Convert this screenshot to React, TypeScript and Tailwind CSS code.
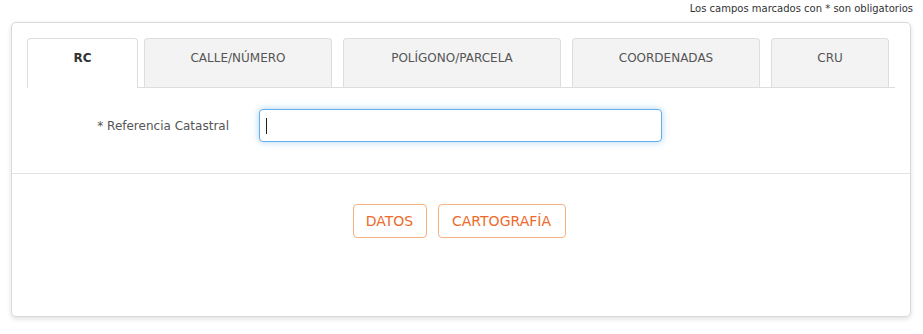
import { useState } from 'react'

const tabs = [
  { id: 'rc', label: 'RC', width: 'w-[111px]', gap: 'mr-[6px]' },
  { id: 'calle', label: 'CALLE/NÚMERO', width: 'w-[188px]', gap: 'mr-[11px]' },
  { id: 'poligono', label: 'POLÍGONO/PARCELA', width: 'w-[218px]', gap: 'mr-[11px]' },
  { id: 'coord', label: 'COORDENADAS', width: 'w-[188px]', gap: 'mr-[11px]' },
  { id: 'cru', label: 'CRU', width: 'w-[118px]', gap: '' },
]

export default function App() {
  const [active, setActive] = useState('rc')

  return (
    <div className="min-h-[334px] bg-white font-['DejaVu_Sans',Verdana,sans-serif] text-[#333]">
      <div className="flex h-[22px] justify-end pt-[2px] pr-[10px] text-[10px] leading-[14px] text-[#333]">
        Los campos marcados con * son obligatorios
      </div>

      <div className="ml-[11px] w-[900px] rounded-[5px] border border-[#d9d9d9] bg-white shadow-[0_2px_5px_rgba(0,0,0,0.12)]">
        <div className="border-b border-[#e3e3e3] px-[15px] pt-[15px] pb-[31px]">
          <div className="flex border-b border-[#dddddd]">
            {tabs.map((t) => {
              const isActive = t.id === active
              return (
                <button
                  key={t.id}
                  onClick={() => setActive(t.id)}
                  className={
                    isActive
                      ? `-mb-px flex h-[50px] ${t.width} ${t.gap} justify-center rounded-t-[4px] border border-b-0 border-[#dddddd] bg-white pt-[12px] text-[12px] leading-[14px] font-bold text-[#333]`
                      : `flex h-[49px] ${t.width} ${t.gap} justify-center rounded-t-[4px] border border-b-0 border-[#dddddd] bg-[#f3f3f3] pt-[12px] text-[12px] leading-[14px] text-[#555]`
                  }
                >
                  {t.label}
                </button>
              )
            })}
          </div>

          <div className="mt-[21px] flex items-center">
            <label className="w-[202px] text-right text-[12px] leading-[16px] text-[#555]">* Referencia Catastral</label>
            <div className="relative ml-[30px]">
              <input
                type="text"
                className="h-[33px] w-[403px] rounded-[4px] border border-[#66afe9] bg-white px-[8px] text-[12px] caret-transparent shadow-[0_0_7px_rgba(102,175,233,0.55)] outline-none"
              />
              <span className="absolute top-[9px] left-[7px] h-[16px] w-px bg-[#222]" />
            </div>
          </div>
        </div>

        <div className="flex justify-center gap-[11px] pt-[30px] pr-[4px] pb-[78px]">
          <button className="h-[34px] w-[74px] rounded-[4px] border border-[#f5b17f] bg-white text-[14px] text-[#ec6a2c]">
            DATOS
          </button>
          <button className="h-[34px] w-[128px] rounded-[4px] border border-[#f5b17f] bg-white text-[14px] text-[#ec6a2c]">
            CARTOGRAFÍA
          </button>
        </div>
      </div>
    </div>
  )
}
